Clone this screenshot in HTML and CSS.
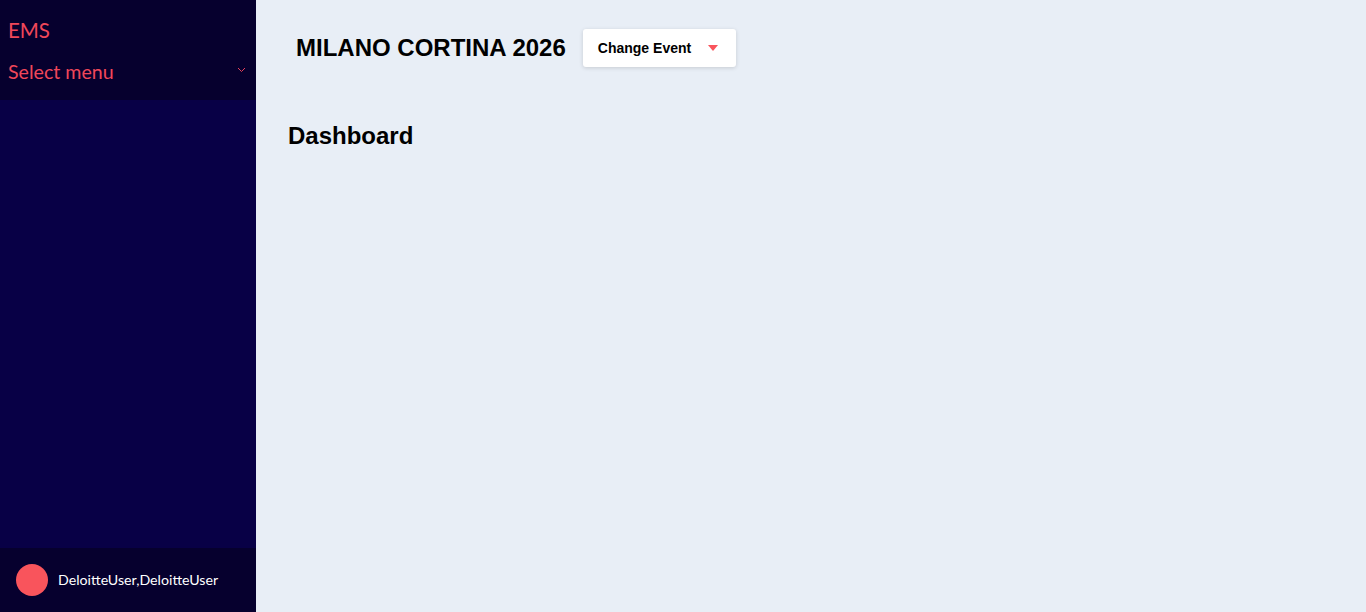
FILE: index.html
```html
<!DOCTYPE html>
<html>
<head>
<meta charset="utf-8">
<link rel="stylesheet" href="styles.css">
</head>
<body>
<div class="app">
  <aside class="sidebar">
    <div class="side-top">
      <div class="brand">EMS</div>
      <div class="select-menu">
        <span>Select menu</span>
        <svg class="chev" width="9" height="6" viewBox="0 0 9 6"><path d="M1 1 L4.5 4.5 L8 1" fill="none" stroke="#e8415a" stroke-width="1"/></svg>
      </div>
    </div>
    <div class="side-body"></div>
    <div class="side-user">
      <span class="avatar"></span>
      <span class="user-name">DeloitteUser,DeloitteUser</span>
    </div>
  </aside>
  <main class="main">
    <header class="topbar">
      <h1 class="event-title">MILANO CORTINA 2026</h1>
      <button class="change-event">
        <span>Change Event</span>
        <svg width="10" height="6" viewBox="0 0 10 6"><path d="M0 0 L10 0 L5 6 Z" fill="#f9545c"/></svg>
      </button>
    </header>
    <h2 class="page-title">Dashboard</h2>
  </main>
</div>
</body>
</html>
```
FILE: styles.css
```css
html, body { margin: 0; padding: 0; height: 100%; }
body { background: #e8eef6; font-family: "Liberation Sans", Arial, sans-serif; }
.app { display: flex; height: 612px; }
.sidebar { width: 256px; flex: 0 0 256px; display: flex; flex-direction: column; background: #080046; font-family: Lato, sans-serif; }
.side-top { background: #06002e; height: 100px; box-sizing: border-box; padding: 17px 8px 0 8px; }
.brand { color: #f0475a; font-size: 20.5px; line-height: 26px; }
.select-menu { display: flex; align-items: center; justify-content: space-between; margin-top: 16px; color: #f0475a; font-size: 19.6px; line-height: 26px; }
.chev { margin-right: 2px; margin-top: -4px; }
.side-body { flex: 1; }
.side-user { height: 64px; background: #06002e; display: flex; align-items: center; padding-left: 16px; gap: 10px; }
.avatar { width: 32px; height: 32px; border-radius: 50%; background: #f9545c; }
.user-name { color: #ffffff; font-size: 14.2px; margin-top: -2px; }
.main { flex: 1; padding: 0 32px; }
.topbar { display: flex; align-items: center; height: 96px; padding-left: 8px; }
.event-title { margin: 0; font-size: 24px; font-weight: bold; color: #000; }
.change-event { margin-left: 17px; display: flex; align-items: center; gap: 17px; height: 38px; padding: 0 18px 0 15px; background: #fff; border: none; border-radius: 3px; box-shadow: 0 1px 4px rgba(0,0,0,0.15); font-family: "Liberation Sans", Arial, sans-serif; font-size: 14px; font-weight: bold; color: #000; }
.page-title { margin: 26px 0 0 0; font-size: 24px; font-weight: bold; color: #000; }
```
